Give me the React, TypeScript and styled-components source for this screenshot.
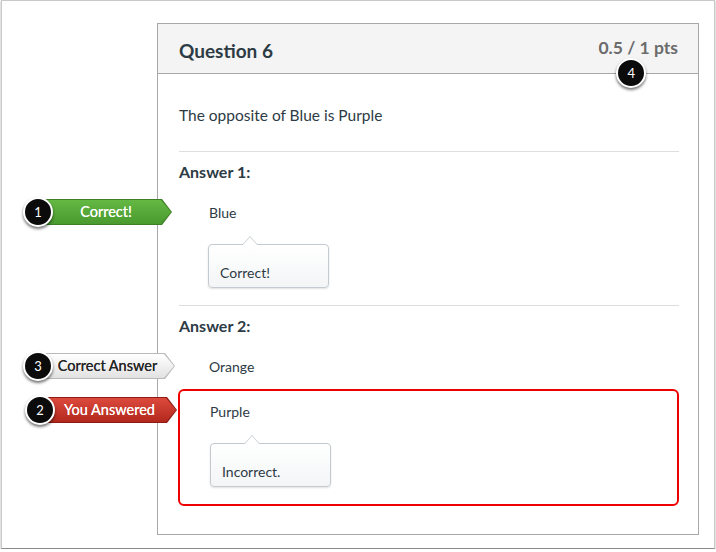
import React from "react";
import styled, { createGlobalStyle, css } from "styled-components";

const Global = createGlobalStyle`
  html, body { margin: 0; padding: 0; background: #ffffff; }
  body { font-family: Lato, "Open Sans", sans-serif; color: #2d3b45; }
  * { box-sizing: border-box; }
`;

const Frame = styled.div`
  width: 714px;
  height: 549px;
  margin: 0 1px 0 1px;
  border: 1px solid #c9c9c9;
  border-bottom-color: #8a8a8a;
  box-shadow: 0 1px 2px rgba(0, 0, 0, 0.35);
  background: #fff;
  padding: 22px 0 0 155px;
`;

const Card = styled.div`
  width: 542px;
  height: 512px;
  border: 1px solid #a8a8a8;
  display: flex;
  flex-direction: column;
`;

const Header = styled.div`
  position: relative;
  height: 50px;
  flex: none;
  background: #f4f4f4;
  border-bottom: 1px solid #a8a8a8;
  display: flex;
  align-items: center;
  justify-content: space-between;
  padding: 3px 20px 0 21px;
`;

const Title = styled.h2`
  margin: 0;
  font-size: 19px;
  font-weight: 700;
  color: #2d3b45;
`;

const Points = styled.div`
  position: relative;
  font-size: 17.5px;
  font-weight: 700;
  color: #6b6b6b;
  margin-top: -6px;
`;

const Body = styled.div`
  padding: 0 19px 0 21px;
  display: flex;
  flex-direction: column;
`;

const QuestionText = styled.p`
  margin: 31px 0 0;
  font-size: 15.5px;
  line-height: 20px;
`;

const Divider = styled.hr<{ $gap: number }>`
  margin: ${(p) => p.$gap}px 0 0;
  border: 0;
  border-top: 1px solid #dcdfe1;
  height: 0;
`;

const AnswerLabel = styled.h3`
  margin: 10px 0 0;
  font-size: 16px;
  line-height: 20px;
  font-weight: 700;
`;

const AnswerLine = styled.div<{ $top: number; $indent: number }>`
  position: relative;
  margin-top: ${(p) => p.$top}px;
  padding-left: ${(p) => p.$indent}px;
  font-size: 14px;
  line-height: 20px;
  color: #2d3b45;
`;

const Comment = styled.div<{ $indent: number }>`
  position: relative;
  width: 121px;
  height: 44px;
  margin: 21px 0 0 ${(p) => p.$indent}px;
  border: 1px solid #c4cbd0;
  border-radius: 4px;
  background: linear-gradient(#ffffff, #f3f5f6);
  box-shadow: 0 1px 2px rgba(0, 0, 0, 0.12);
  font-size: 14px;
  line-height: 20px;
  padding: 18px 0 0 11px;
  color: #2d3b45;

  &::before,
  &::after {
    content: "";
    position: absolute;
    left: 33px;
    width: 0;
    height: 0;
    border: 8px solid transparent;
    border-top: 0;
  }
  &::before {
    top: -9px;
    border-bottom: 9px solid #c4cbd0;
  }
  &::after {
    top: -8px;
    border-bottom: 9px solid #ffffff;
  }
`;

const Answered = styled.div`
  position: relative;
  margin: 12px 0 0 -1px;
  height: 117px;
  border: 2px solid #ee0000;
  border-radius: 6px;
  padding: 11px 0 0 30px;
`;

type Tone = "green" | "gray" | "red";

const tones: Record<Tone, { edge: string; fill: string; text: string }> = {
  green: {
    edge: "#3d7f27",
    fill: "linear-gradient(#64b843, #4a9a2f)",
    text: "#ffffff",
  },
  gray: {
    edge: "#b9b9b9",
    fill: "linear-gradient(#ffffff, #e2e2e2)",
    text: "#262626",
  },
  red: {
    edge: "#8e1c14",
    fill: "linear-gradient(#dc4a3d, #b3281d)",
    text: "#ffffff",
  },
};

const Callout = styled.div<{ $top: number; $gap: number }>`
  position: absolute;
  top: ${(p) => p.$top}px;
  right: calc(100% + ${(p) => p.$gap}px);
  display: flex;
  align-items: center;
`;

const Badge = styled.span<{ $free?: boolean }>`
  position: relative;
  z-index: 2;
  flex: none;
  width: 30px;
  height: 30px;
  border-radius: 50%;
  background: #0b0b0b;
  border: 2px solid #ffffff;
  box-shadow: 0 2px 3px rgba(0, 0, 0, 0.55);
  color: #ffffff;
  font-size: 13px;
  font-weight: 400;
  display: flex;
  align-items: center;
  justify-content: center;
  margin-right: -8px;
  ${(p) =>
    p.$free &&
    css`
      position: absolute;
      top: 21px;
      left: 50%;
      margin: 0 0 0 -22px;
    `}
`;

const tagShape = "polygon(0 0, calc(100% - 10px) 0, 100% 50%, calc(100% - 10px) 100%, 0 100%)";

const Tag = styled.div<{ $tone: Tone; $width: number }>`
  width: ${(p) => p.$width}px;
  height: 26px;
  padding: 1px 1px 1px 0;
  background: ${(p) => tones[p.$tone].edge};
  clip-path: ${tagShape};
`;

const TagFill = styled.div<{ $tone: Tone }>`
  height: 100%;
  background: ${(p) => tones[p.$tone].fill};
  clip-path: ${tagShape};
  color: ${(p) => tones[p.$tone].text};
  font-size: 14.5px;
  line-height: 24px;
  text-align: center;
  padding: 0 12px 0 8px;
  white-space: nowrap;
  text-shadow: 0 0 0.4px ${(p) => tones[p.$tone].text};
`;

function Marker({
  n,
  tone,
  label,
  top,
  gap,
  width,
}: {
  n: number;
  tone: Tone;
  label: string;
  top: number;
  gap: number;
  width: number;
}) {
  return (
    <Callout $top={top} $gap={gap}>
      <Badge>{n}</Badge>
      <Tag $tone={tone} $width={width}>
        <TagFill $tone={tone}>{label}</TagFill>
      </Tag>
    </Callout>
  );
}

export default function App() {
  return (
    <>
      <Global />
      <Frame>
        <Card>
          <Header>
            <Title>Question 6</Title>
            <Points>
              0.5 / 1 pts
              <Badge $free>4</Badge>
            </Points>
          </Header>
          <Body>
            <QuestionText>The opposite of Blue is Purple</QuestionText>
            <Divider $gap={26} />
            <AnswerLabel>Answer 1:</AnswerLabel>
            <AnswerLine $top={21} $indent={30}>
              <Marker n={1} tone="green" label="Correct!" top={-6} gap={7} width={127} />
              Blue
            </AnswerLine>
            <Comment $indent={29}>Correct!</Comment>
            <Divider $gap={17} />
            <AnswerLabel>Answer 2:</AnswerLabel>
            <AnswerLine $top={21} $indent={30}>
              <Marker n={3} tone="gray" label="Correct Answer" top={-6} gap={4} width={130} />
              Orange
            </AnswerLine>
            <Answered>
              <Marker n={2} tone="red" label="You Answered" top={4} gap={3} width={130} />
              <AnswerLine $top={0} $indent={0}>
                Purple
              </AnswerLine>
              <Comment $indent={0}>Incorrect.</Comment>
            </Answered>
          </Body>
        </Card>
      </Frame>
    </>
  );
}
